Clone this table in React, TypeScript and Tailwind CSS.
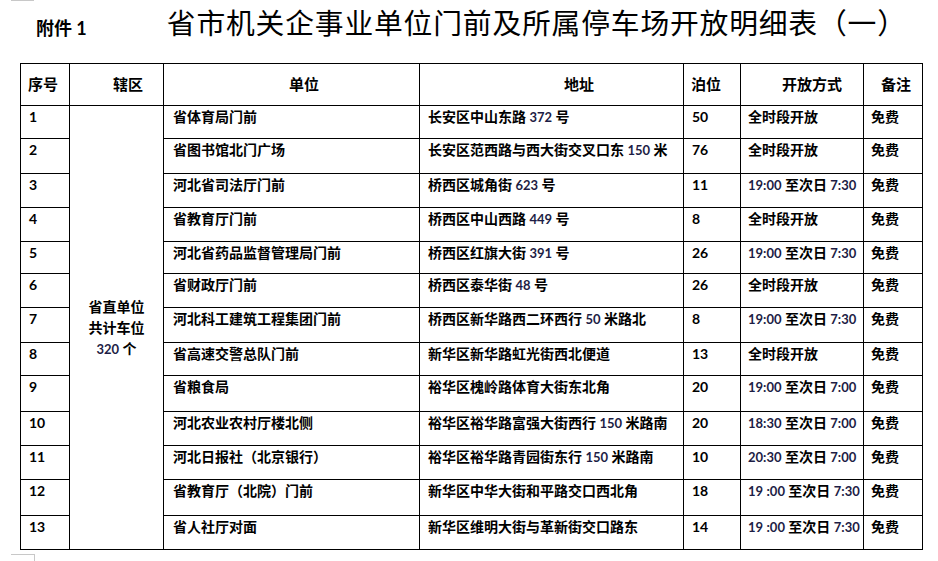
const rows = [
  ['1', '省体育局门前', '长安区中山东路 372 号', '50', '全时段开放'],
  ['2', '省图书馆北门广场', '长安区范西路与西大街交叉口东 150 米', '76', '全时段开放'],
  ['3', '河北省司法厅门前', '桥西区城角街 623 号', '11', '19:00 至次日 7:30'],
  ['4', '省教育厅门前', '桥西区中山西路 449 号', '8', '全时段开放'],
  ['5', '河北省药品监督管理局门前', '桥西区红旗大街 391 号', '26', '19:00 至次日 7:30'],
  ['6', '省财政厅门前', '桥西区泰华街 48 号', '26', '全时段开放'],
  ['7', '河北科工建筑工程集团门前', '桥西区新华路西二环西行 50 米路北', '8', '19:00 至次日 7:30'],
  ['8', '省高速交警总队门前', '新华区新华路虹光街西北便道', '13', '全时段开放'],
  ['9', '省粮食局', '裕华区槐岭路体育大街东北角', '20', '19:00 至次日 7:00'],
  ['10', '河北农业农村厅楼北侧', '裕华区裕华路富强大街西行 150 米路南', '20', '18:30 至次日 7:00'],
  ['11', '河北日报社（北京银行）', '裕华区裕华路青园街东行 150 米路南', '10', '20:30 至次日 7:00'],
  ['12', '省教育厅（北院）门前', '新华区中华大街和平路交口西北角', '18', '19 :00 至次日 7:30'],
  ['13', '省人社厅对面', '新华区维明大街与革新街交口路东', '14', '19 :00 至次日 7:30'],
]

// row heights measured from the screenshot
const heights = [33, 35, 34, 34, 32, 34, 35, 33, 36, 34, 34, 36, 34]

const font = { fontFamily: "Lato, 'Noto Sans CJK SC', sans-serif" }

// wrap digits so they get the navy tint and smaller size seen in the reference
function Mixed({ text }: { text: string }) {
  const parts = text.split(/([0-9:]+)/)
  return (
    <>
      {parts.map((p, i) =>
        /^[0-9:]+$/.test(p) ? (
          <span key={i} className="text-[#1d1d45] text-[13px]">
            {p}
          </span>
        ) : (
          <span key={i}>{p}</span>
        )
      )}
    </>
  )
}

export default function App() {
  const td = 'border border-black align-top text-left pt-[2px] font-bold text-[14px] leading-[18px] text-black whitespace-nowrap overflow-hidden'
  const th = 'border border-black text-left font-bold text-[15px] text-black whitespace-nowrap'

  return (
    <div className="w-[938px] h-[561px] overflow-hidden bg-white" style={font}>
      <div className="ml-[11px] w-[23px] h-px bg-[#c8c8c8]" />
      <div className="flex items-end h-[37px] pl-[36px]">
        <div className="font-bold text-[18px] leading-none mb-[1px] text-black">附件 1</div>
        <div className="ml-[80px] text-[28.8px] tracking-[0.8px] leading-none text-black">省市机关企事业单位门前及所属停车场开放明细表（一）</div>
      </div>
      <div className="h-[25px]" />
      <table className="ml-[20px] table-fixed border-collapse w-[902px]">
        <colgroup>
          <col className="w-[49px]" />
          <col className="w-[94px]" />
          <col className="w-[256px]" />
          <col className="w-[264px]" />
          <col className="w-[57px]" />
          <col className="w-[123px]" />
          <col className="w-[59px]" />
        </colgroup>
        <thead>
          <tr className="h-[42px]">
            <th className={`${th} pl-[7px]`}>序号</th>
            <th className={`${th} pl-[43px]`}>辖区</th>
            <th className={`${th} pl-[125px]`}>单位</th>
            <th className={`${th} pl-[144px]`}>地址</th>
            <th className={`${th} pl-[7px]`}>泊位</th>
            <th className={`${th} pl-[41px]`}>开放方式</th>
            <th className={`${th} pl-[17px]`}>备注</th>
          </tr>
        </thead>
        <tbody>
          {rows.map((r, i) => (
            <tr key={r[0]} style={{ height: heights[i] }}>
              <td className={`${td} pl-[8px] text-[13px] text-[#1d1d45]`}>{r[0]}</td>
              {i === 0 && (
                <td rowSpan={13} className="border border-black align-middle text-center font-bold text-[14px] leading-[21px] text-black">
                  <div>省直单位</div>
                  <div>共计车位</div>
                  <div>
                    <span className="text-[#1d1d45] text-[13px]">320</span> 个
                  </div>
                </td>
              )}
              <td className={`${td} pl-[9px]`}>{r[1]}</td>
              <td className={`${td} pl-[8px]`}>
                <Mixed text={r[2]} />
              </td>
              <td className={`${td} pl-[8px] text-[13px] text-[#1d1d45]`}>{r[3]}</td>
              <td className={`${td} pl-[7px]`}>
                <Mixed text={r[4]} />
              </td>
              <td className={`${td} pl-[7px]`}>免费</td>
            </tr>
          ))}
        </tbody>
      </table>
      <div className="mt-[4px] flex">
        <div className="ml-[11px] w-[23px] h-px bg-[#c8c8c8]" />
        <div className="w-px h-[8px] bg-[#c8c8c8]" />
      </div>
    </div>
  )
}
